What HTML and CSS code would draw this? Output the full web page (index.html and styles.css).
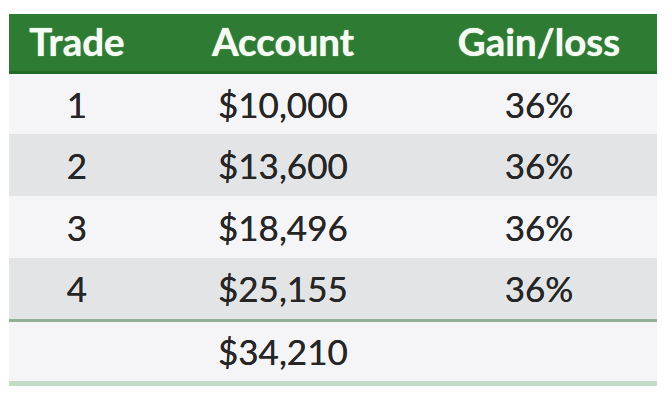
FILE: index.html
```html
<!DOCTYPE html>
<html>
<head>
<meta charset="utf-8">
<link rel="stylesheet" href="styles.css">
</head>
<body>
<div class="page">
  <table class="trades">
    <colgroup>
      <col class="c1"><col class="c2"><col class="c3">
    </colgroup>
    <thead>
      <tr><th>Trade</th><th>Account</th><th>Gain/loss</th></tr>
    </thead>
    <tbody>
      <tr class="light"><td>1</td><td class="acct">$10,000</td><td>36%</td></tr>
      <tr class="dark"><td>2</td><td class="acct">$13,600</td><td>36%</td></tr>
      <tr class="light"><td>3</td><td class="acct">$18,496</td><td>36%</td></tr>
      <tr class="dark last"><td>4</td><td class="acct">$25,155</td><td>36%</td></tr>
    </tbody>
    <tfoot>
      <tr class="total"><td></td><td class="acct">$34,210</td><td></td></tr>
    </tfoot>
  </table>
</div>
</body>
</html>
```
FILE: styles.css
```css
html, body {
  margin: 0;
  padding: 0;
  background: #ffffff;
}
.page {
  padding: 14px 15px 0 9px;
}
.trades {
  width: 648px;
  border-collapse: collapse;
  table-layout: fixed;
  font-family: Lato, "Open Sans", sans-serif;
  color: #262626;
}
.c1 { width: 136px; }
.c2 { width: 276px; }
.c3 { width: 236px; }
.trades th {
  height: 58px;
  padding: 0 0 2px 0;
  background: #2e7b33;
  border-bottom: 3px solid #236a28;
  color: #f4fbf2;
  font-weight: 700;
  font-size: 38.5px;
  text-align: center;
  box-sizing: border-box;
  text-shadow: 0 0 1px #ffffff;
}
.trades td {
  height: 62px;
  padding: 0;
  text-align: center;
  font-size: 35px;
  box-sizing: border-box;
  text-shadow: 0 0 0.6px #262626;
}
.trades td.acct {
  text-align: left;
  padding-left: 73px;
}
.light td { background: #f5f5f7; }
.dark td { background: #e3e4e6; }
.last td {
  border-bottom: 3px solid #8fb096;
}
.total td {
  height: 63px;
  background: #f5f5f7;
  border-bottom: 5px solid #c3dcc5;
}
```
